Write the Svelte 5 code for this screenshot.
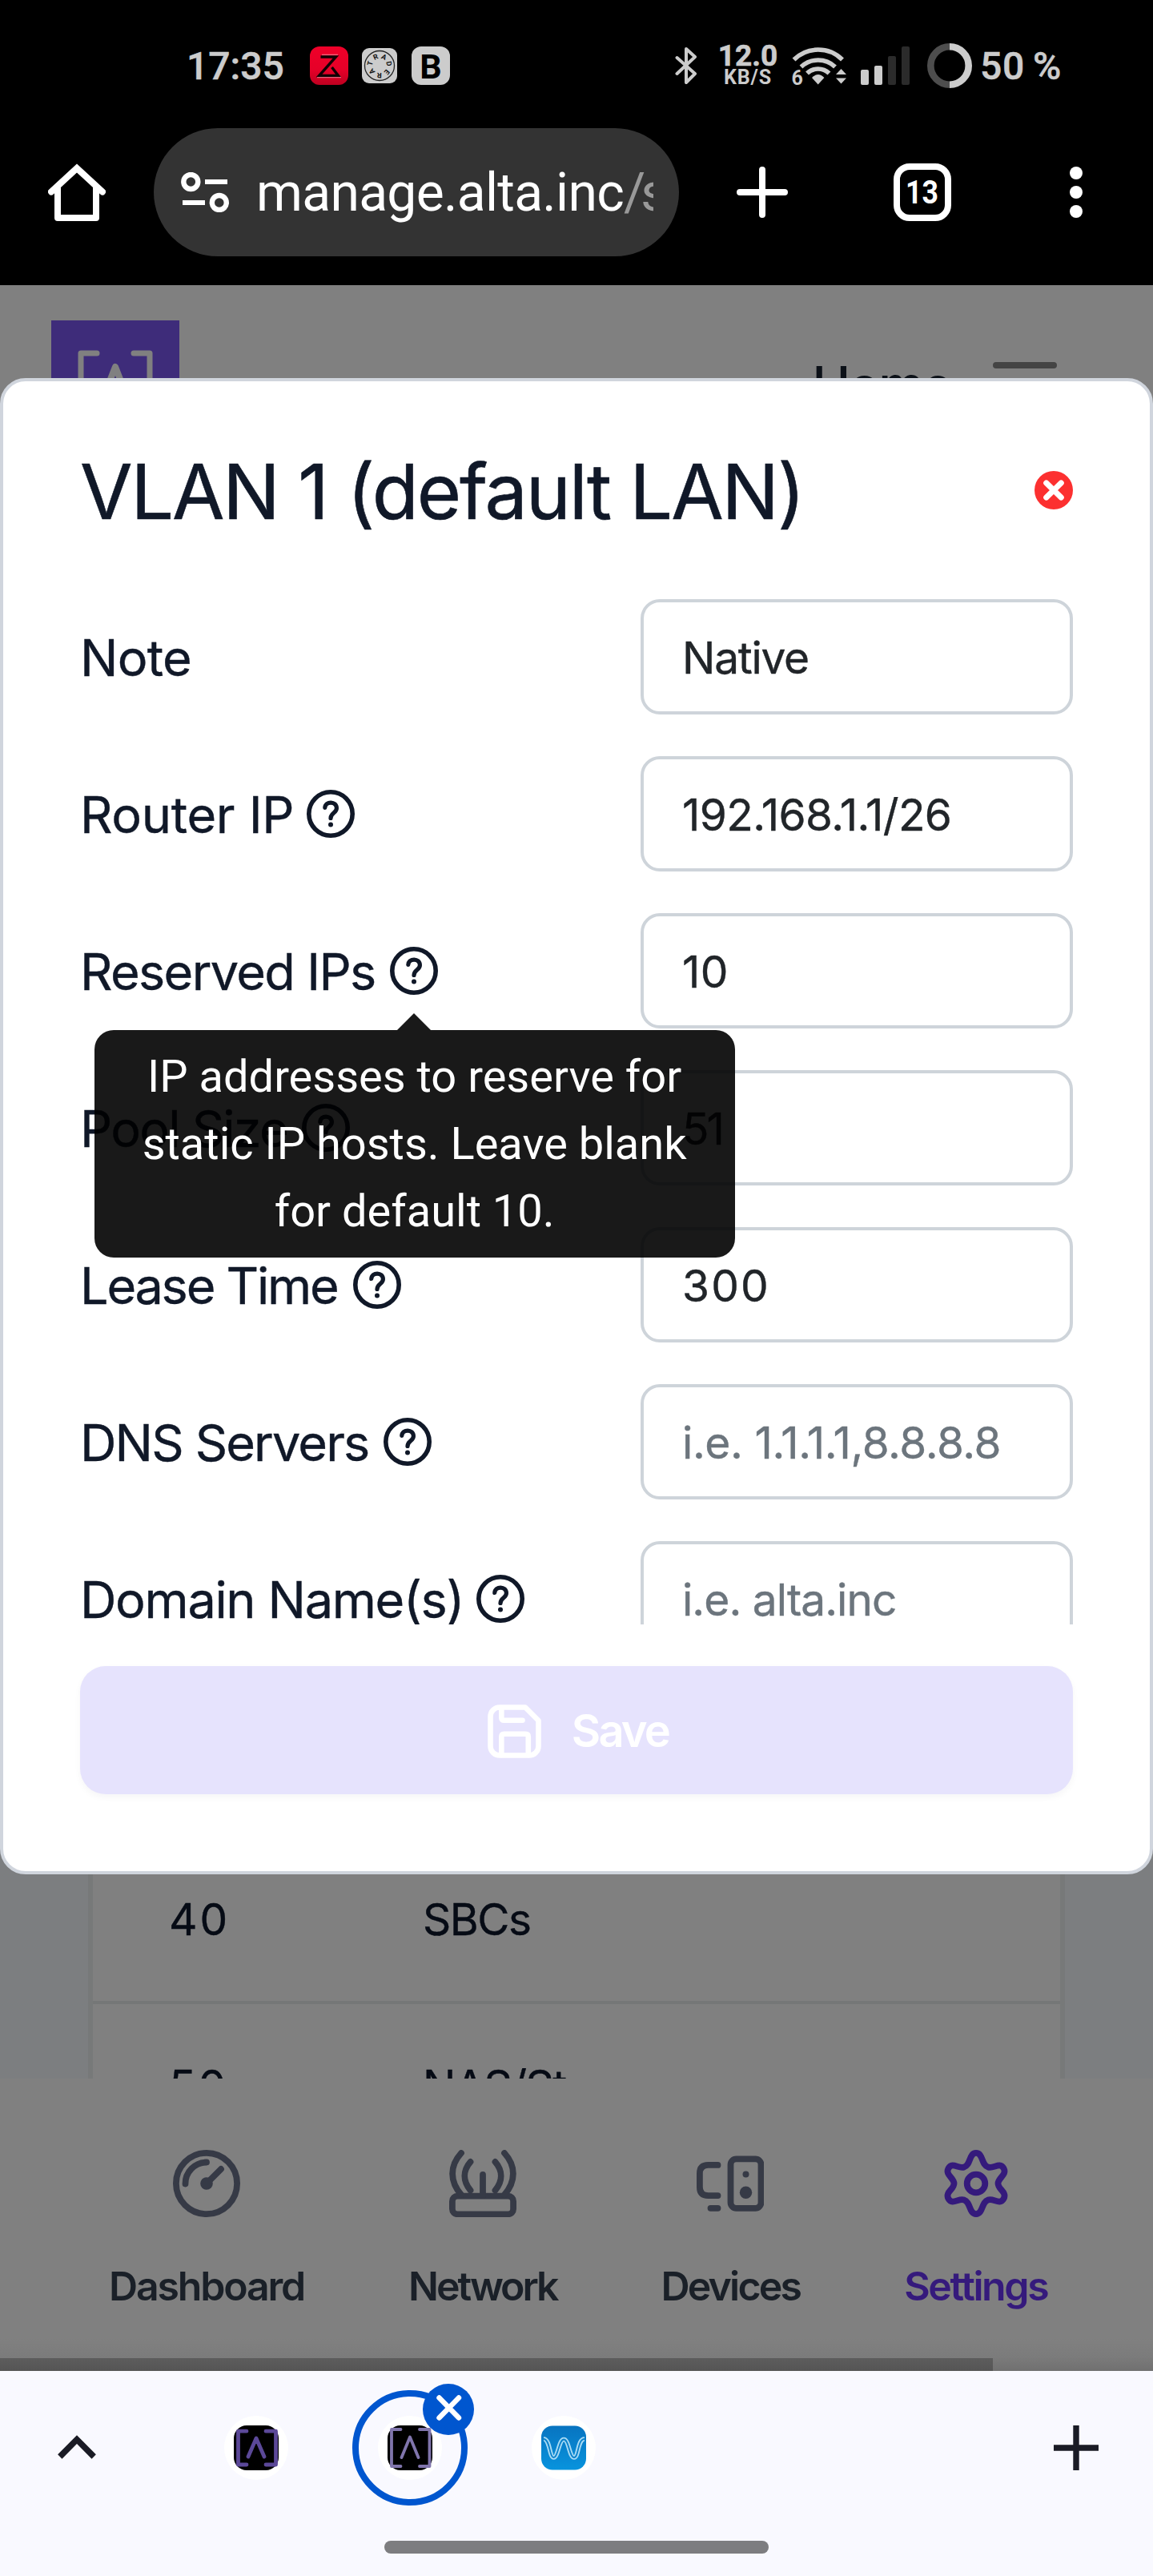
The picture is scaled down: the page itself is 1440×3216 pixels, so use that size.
<script>
  const fields = [
    { label: 'Note', value: 'Native', track: -0.75, inputTrack: -1.29 },
    { label: 'Router IP', value: '192.168.1.1/26', track: -0.3, inputTrack: -0.6, help: true, gap: 16 },
    { label: 'Reserved IPs', value: '10', track: -1.67, inputTrack: 0.5, help: true, gap: 18 },
    { label: 'Pool Size', value: '51', track: -1.75, inputTrack: -3, help: true, gap: 18 },
    { label: 'Lease Time', value: '300', track: -2.24, inputTrack: 2.2, help: true, gap: 19 },
    { label: 'DNS Servers', placeholder: 'i.e. 1.1.1.1,8.8.8.8', track: -1.85, inputTrack: -0.4, help: true, gap: 19 },
    { label: 'Domain Name(s)', placeholder: 'i.e. alta.inc', track: -1.35, inputTrack: -0.95, help: true, gap: 16 }
  ];
  fields[2].tip = 'IP addresses to reserve for static IP hosts. Leave blank for default 10.';

  const vlans = [
    { id: '40', name: 'SBCs' },
    { id: '50', name: 'NAS/St' }
  ];

  const dial = 'RADERAT'.split('').map((letter, i) => ({ letter, angle: -24 + i * 51.4 }));
</script>

<div class="screen">
  <div class="status">
    <span class="clock">17:35</span>
    <svg class="app-z" width="48" height="48" viewBox="0 0 48 48">
      <defs>
        <linearGradient id="red" x1="0" y1="0" x2="0" y2="1">
          <stop offset="0" stop-color="#ef0029" /><stop offset=".6" stop-color="#e60028" /><stop offset="1" stop-color="#be0020" />
        </linearGradient>
      </defs>
      <rect width="48" height="48" rx="12" fill="url(#red)" />
      <path d="M13.500 13H32.500L11.500 36.500H35.500L27.500 26" fill="none" stroke="#120004" stroke-width="3.4" />
      <path d="M15 10.300H35M9 38.700H39" stroke="#f6a3b0" stroke-width=".8" />
    </svg>
    <svg class="app-dial" width="44" height="44" viewBox="0 0 44 44">
      <rect width="44" height="44" rx="9" fill="#ccc" />
      <circle cx="22" cy="22" r="18.5" fill="none" stroke="#222" stroke-width="1.3" />
      {#each dial as d}
        <text x="22" y="13" text-anchor="middle" transform="rotate({d.angle} 22 22)">{d.letter}</text>
      {/each}
    </svg>
    <span class="app-b">B</span>

    <svg class="bt" width="28" height="48" viewBox="0 0 28 48" fill="none" stroke="#ccc" stroke-width="4" stroke-linejoin="round" stroke-linecap="round">
      <path d="M2.5 14 L25 34 L14 45 V3 L25 13 L2.5 34" />
    </svg>
    <div class="speed"><span class="rate">12.0</span><span class="unit">KB/S</span></div>
    <svg class="wifi" width="68" height="50" viewBox="0 0 68 50" fill="none" stroke="#ccc" stroke-width="5.6">
      <path d="M2.5 17.5A43 43 0 0 1 63 17.5" />
      <path d="M11.5 26.5A31 31 0 0 1 54 26.5" />
      <path d="M19 34.5A20 20 0 0 1 46.5 34.5" />
      <path d="M32.7 48.5L25 40Q32.7 32 40.4 40Z" fill="#ccc" stroke="none" />
      <path d="M55 36L61.5 29L68 36ZM55 40.5H68L61.5 47.5Z" fill="#ccc" stroke="none" />
      <text x="-.5" y="49">6</text>
    </svg>
    <svg class="signal" width="61" height="48" viewBox="0 0 61 48">
      <rect y="29" width="10" height="19" rx="2" fill="#ccc" />
      <rect x="17" y="24" width="10" height="24" rx="2" fill="#ccc" />
      <rect x="34" y="12" width="10" height="36" rx="2" fill="#2b2b2b" />
      <rect x="51" width="10" height="48" rx="2" fill="#2b2b2b" />
    </svg>
    <svg class="battery" width="56" height="56" viewBox="0 0 56 56" fill="none" stroke-width="8.6">
      <path d="M28 4.3A23.7 23.7 0 0 0 28 51.7" stroke="#4d4d4d" />
      <path d="M28 4.3A23.7 23.7 0 0 1 28 51.7" stroke="#ccc" />
    </svg>
    <span class="charge">50</span><span class="percent">%</span>
  </div>

  <div class="toolbar">
    <svg class="home" width="72" height="72" viewBox="0 0 72 72" fill="none" stroke="#fff" stroke-width="8" stroke-linecap="round" stroke-linejoin="round">
      <path d="M12 31V68H60V31" />
      <path d="M4 35.5L36 6L68 35.5" stroke-linejoin="miter" />
    </svg>
    <div class="address">
      <svg width="60" height="50" viewBox="0 0 60 50" fill="none" stroke="#fff" stroke-width="6.4">
        <circle cx="12.3" cy="12" r="9" /><circle cx="47.8" cy="38" r="9" />
        <path d="M30 12H58M2 38H30" stroke-width="6" />
      </svg>
      <span class="url">manage.alta.inc<span class="path">/s</span></span>
    </div>
    <svg class="plus" width="64" height="64" viewBox="0 0 64 64" stroke="#fff" stroke-width="8" stroke-linecap="round"><path d="M32 4V60M4 32H60" /></svg>
    <div class="tabs"><span>13</span></div>
    <svg class="dots" width="16" height="64" viewBox="0 0 16 64" fill="#fff"><circle cx="8" cy="8" r="8" /><circle cx="8" cy="32" r="8" /><circle cx="8" cy="56" r="8" /></svg>
  </div>

  <main class="page">
    <header>
      <svg width="160" height="160" viewBox="0 0 160 160">
        <rect width="160" height="160" fill="#3e2c7a" />
        <g fill="none" stroke="#808080" stroke-width="7" stroke-linecap="round" stroke-linejoin="round">
          <path d="M57 41H37V119H57M103 41H123V119H103" />
          <path d="M62 104L80 58L98 104" stroke-width="8" />
        </g>
      </svg>
      <span class="site">Home</span>
      <div class="menu"><i></i><i></i><i></i></div>
    </header>

    <section class="content">
      <div class="table">
        {#each vlans as v}
          <div class="vlan"><span>{v.id}</span><span>{v.name}</span></div>
        {/each}
      </div>
    </section>

    <nav>
      <div class="item">
        <svg width="84" height="84" viewBox="0 0 84 84" fill="none" stroke="currentColor" stroke-width="7.8" stroke-linecap="round">
          <circle cx="42" cy="42" r="38.1" />
          <path d="M15.5 42.5A26.7 26.7 0 0 1 42 15.5" />
          <path d="M42 42L60 24" />
          <circle cx="42" cy="42" r="7.8" fill="currentColor" stroke="none" />
        </svg>
        <span class="dash">Dashboard</span>
      </div>
      <div class="item">
        <svg width="84" height="84" viewBox="0 0 84 84" fill="none" stroke="currentColor" stroke-width="7.8" stroke-linecap="round" stroke-linejoin="round">
          <rect x="3.9" y="57.7" width="76.2" height="22.6" rx="6.5" />
          <path d="M42 31V57M15 56C.5 39 .5 20 15 4M69 56C83.5 39 83.5 20 69 4M26.5 50.5C17 39 17 26 26.5 15M57.5 50.5C67 39 67 26 57.5 15" />
        </svg>
        <span class="net">Network</span>
      </div>
      <div class="item">
        <svg width="84" height="84" viewBox="0 0 84 84" fill="none" stroke="currentColor" stroke-width="7.8" stroke-linecap="round" stroke-linejoin="round">
          <path d="M26.5 18.900H14.500Q3.900 18.900 3.900 29.500V46.500Q3.900 57.100 14.500 57.100H26.500M17.500 72.800H26.500" />
          <rect x="42.5" y="11.4" width="38" height="61.4" rx="7" />
          <circle cx="61.5" cy="30.5" r="4" fill="currentColor" stroke="none" />
          <circle cx="61.5" cy="53.3" r="7.7" fill="currentColor" stroke="none" />
        </svg>
        <span class="dev">Devices</span>
      </div>
      <div class="item active">
        <svg width="84" height="84" viewBox="0 0 84 84" fill="none" stroke="currentColor" stroke-width="7.8" stroke-linejoin="round">
          <path d="M42 3.900C51 3.900 48.500 19 57 21.500C64 24 71.500 14.500 76.500 23C81 31.500 69.500 34.500 69.500 42C69.500 49.500 81 52.500 76.500 61C71.500 69.500 64 60 57 62.500C48.500 65 51 80.100 42 80.100C33 80.100 35.500 65 27 62.500C20 60 12.500 69.500 7.500 61C3 52.500 14.500 49.500 14.500 42C14.500 34.500 3 31.500 7.500 23C12.500 14.500 20 24 27 21.500C35.500 19 33 3.900 42 3.900Z" />
          <circle cx="42" cy="42" r="11.3" />
        </svg>
        <span class="set">Settings</span>
      </div>
    </nav>
    <div class="track"><div class="thumb"></div></div>

    <div class="modal">
      <div class="head">
        <h1>VLAN 1 (default LAN)</h1>
        <svg width="48" height="48" viewBox="0 0 48 48">
          <circle cx="24" cy="24" r="24" fill="#fc3030" />
          <path d="M14.800 15L33.200 33M33.200 15L14.800 33" stroke="#fff" stroke-width="7.2" stroke-linecap="round" />
        </svg>
      </div>
      <div class="fields">
        {#each fields as f}
          <div class="field">
            <div class="label" style:gap="{f.gap ?? 0}px">
              <span style:letter-spacing="{f.track}px">{f.label}</span>
              {#if f.help}
                <div class="help">
                  <svg width="60" height="60" viewBox="0 0 60 60" fill="none" stroke="#101828" stroke-linecap="round">
                    <circle cx="30" cy="30" r="27.2" stroke-width="5.6" />
                    <path d="M22.800 22.500C23.200 13.800 37.400 13.800 37.400 23C37.400 29 30 28.500 30 35.500" stroke-width="5.2" />
                    <circle cx="30" cy="43.5" r="3" fill="#101828" stroke="none" />
                  </svg>
                  {#if f.tip}<div class="tip">{f.tip}</div>{/if}
                </div>
              {/if}
            </div>
            <input type="text" value={f.value ?? ''} placeholder={f.placeholder} style:letter-spacing="{f.inputTrack}px" />
          </div>
        {/each}
      </div>
      <button class="save" disabled>
        <svg width="67" height="67" viewBox="0 0 67 67" fill="none" stroke="#fff" stroke-width="6.6" stroke-linecap="round" stroke-linejoin="round">
          <path d="M15 3.500H47L63.500 20V52A11.500 11.500 0 0 1 52 63.500H15A11.500 11.500 0 0 1 3.500 52V15A11.500 11.500 0 0 1 15 3.500Z" />
          <path d="M17.300 4V16.500Q17.300 19.800 20.600 19.800H43.500M17.300 63V40Q17.300 36.700 20.600 36.700H47.500Q50.800 36.700 50.800 40V63" />
        </svg>
        <span>Save</span>
      </button>
    </div>
  </main>

  <footer>
    <div class="strip">
      <svg width="48" height="48" viewBox="0 0 48 48" fill="none" stroke="#1a1b25" stroke-width="7.5"><path d="M2.800 35L24 13.500L45.200 35" /></svg>
      <svg class="fav first" width="80" height="80" viewBox="0 0 80 80">
        <circle cx="40" cy="40" r="40" fill="#fff" />
        <rect x="12" y="12" width="56" height="56" rx="16" fill="#000" />
        <path d="M28 19.200H17.500V61H28M52 19.200H64.500V61H52M30 51L40 28L50 51" fill="none" stroke="#5b4898" stroke-width="4.8" stroke-linecap="round" stroke-linejoin="round" />
      </svg>
      <div class="current">
        <svg width="80" height="80" viewBox="0 0 80 80">
          <circle cx="40" cy="40" r="40" fill="#fff" />
          <rect x="12" y="12" width="56" height="56" rx="16" fill="#000" />
          <path d="M28.500 17H17V63H28.500M52 17H64.500V63H52M29.500 52L40 26.500L50.500 52" fill="none" stroke="#8075ac" stroke-width="3.8" stroke-linecap="round" stroke-linejoin="round" />
        </svg>
        <svg class="badge" width="64" height="64" viewBox="0 0 64 64">
          <circle cx="32" cy="32" r="32" fill="#0056cf" />
          <path d="M20.500 17.500L45 42.500M45 17.500L20.500 42.500" stroke="#fff" stroke-width="6.4" stroke-linecap="round" />
        </svg>
      </div>
      <svg class="fav" width="80" height="80" viewBox="0 0 80 80">
        <defs>
          <linearGradient id="sky" x1="0" y1="0" x2="0" y2="1"><stop offset="0" stop-color="#0874c0" /><stop offset="1" stop-color="#0893dd" /></linearGradient>
        </defs>
        <circle cx="40" cy="40" r="40" fill="#fff" />
        <rect x="12" y="12.5" width="56" height="55" rx="14" fill="url(#sky)" />
        <g fill="none">
          <path d="M15 29C23 29 22 52 27.500 52C33 52 34 29.500 40.200 29.500C46.500 29.500 47 52 53 52C59 52 57 29 66 29" stroke="#a9dbf5" stroke-width="5.6" />
          <path d="M15 29C23 29 22 52 27.500 52C33 52 34 29.500 40.200 29.500C46.500 29.500 47 52 53 52C59 52 57 29 66 29" stroke="#0a82cc" stroke-width="1.8" />
        </g>
      </svg>
      <svg class="add" width="56" height="56" viewBox="0 0 56 56" stroke="#1a1b25" stroke-width="7.4"><path d="M28 0V56M0 28H56" /></svg>
    </div>
    <div class="handle"></div>
  </footer>
</div>

<style>
  :global(body) { margin: 0; background: #000; }
  * { box-sizing: border-box; }
  svg { display: block; flex: none; }

  .screen { width: 1440px; height: 3216px; overflow: hidden; background: #000; font-family: Inter, "Liberation Sans", sans-serif; }

  .status { height: 160px; padding: 4px 0 0 233px; display: flex; align-items: center; color: #ccc; font-family: Roboto, sans-serif; font-weight: 500; font-size: 48px; white-space: nowrap; }
  .clock { width: 121px; -webkit-text-stroke: .5px; }
  .app-z { margin-left: 33px; }
  .app-dial { margin-left: 17px; }
  .app-dial text { font: 700 9px Roboto, sans-serif; fill: #111; }
  .app-b { margin-left: 18px; width: 48px; height: 48px; border-radius: 12px; background: #ccc; color: #000; font-size: 43px; line-height: 50px; font-weight: 700; text-align: center; }
  .bt { margin-left: 281px; }
  .speed { margin-left: 26px; width: 74px; display: flex; flex-direction: column; align-items: center; font-weight: 700; }
  .rate { font-size: 37px; line-height: 28px; letter-spacing: 0; -webkit-text-stroke: .6px; }
  .unit { font-size: 25px; line-height: 25px; letter-spacing: .9px; }
  .wifi { margin-left: 18px; }
  .wifi text { font: 700 25px Roboto, sans-serif; fill: #ccc; stroke: #000; stroke-width: 3px; paint-order: stroke; }
  .signal { margin-left: 18px; }
  .battery { margin-left: 22px; }
  .charge { margin-left: 10px; letter-spacing: .7px; -webkit-text-stroke: .5px; }
  .percent { margin-left: 10px; -webkit-text-stroke: .5px; }

  .toolbar { height: 196px; padding: 0 0 36px 60px; display: flex; align-items: center; }
  .address { margin-left: 60px; width: 656px; height: 160px; border-radius: 80px; background: #333; padding-left: 34px; display: flex; align-items: center; }
  .url { margin-left: 34px; width: 496px; padding-top: 2px; overflow: hidden; white-space: nowrap; font: 66px/100px Roboto, sans-serif; letter-spacing: -.7px; color: #fff; }
  .path { color: #999; letter-spacing: -6px; }
  .plus { margin-left: 72px; }
  .tabs { margin-left: 132px; width: 72px; height: 72px; border: 8px solid #fff; border-radius: 20px; color: #fff; display: flex; align-items: center; justify-content: center; font: 700 41px/56px Roboto, sans-serif; }
  .tabs span { transform: scaleX(.87); }
  .dots { margin-left: 148px; }

  .page { position: relative; height: 2604px; background: #808080; overflow: hidden; }
  header { height: 248px; padding: 0 120px 0 64px; display: flex; align-items: center; }
  .site { margin-left: auto; color: #0c1118; font-size: 64px; font-weight: 500; letter-spacing: -1.8px; }
  .menu { margin-left: 52px; width: 80px; display: flex; flex-direction: column; gap: 16px; }
  .menu i { height: 8px; border-radius: 4px; background: #444; }

  .content { height: 1991px; padding: 0 110px; background: #7c7e80; overflow: hidden; }
  .table { height: 100%; padding-top: 1690px; background: #808080; border: solid #777979; border-width: 0 6px; overflow: hidden; }
  .vlan { height: 208px; padding-left: 95px; display: grid; grid-template-columns: 317px 1fr; align-items: center; border-bottom: 4px solid #757777; font-size: 55px; letter-spacing: -1.5px; color: #060b15; -webkit-text-stroke: .4px; }
  .vlan span:first-child { letter-spacing: 3px; }

  nav { height: 349px; padding: 89px 0 0 136px; display: flex; gap: 130px; background: linear-gradient(#808080 93%, #7b7b7b); color: #363a46; }
  .item { display: flex; flex-direction: column; align-items: center; gap: 56px; }
  .item span { font-size: 50px; line-height: 60px; font-weight: 600; color: #1a2028; }
  .item .dash { letter-spacing: -2.19px; }
  .item .net { letter-spacing: -3.06px; }
  .item .dev { letter-spacing: -2.8px; }
  .item .set { letter-spacing: -2.4px; }
  .active, .item.active span { color: #351a7c; }
  .track { height: 16px; background: linear-gradient(#7a7a7a, #707070); }
  .thumb { width: 1240px; height: 16px; background: linear-gradient(#5d5d5d, #555); }

  .modal { position: absolute; left: 0; top: 116px; width: 1440px; height: 1868px; padding: 0 96px; border: 4px solid #d0d5dd; border-radius: 32px; background: #fff; }
  .head { height: 272px; display: flex; align-items: center; justify-content: space-between; }
  h1 { margin: 2px 0 0; font-size: 95px; font-weight: 400; letter-spacing: -2.15px; color: #101828; white-space: nowrap; -webkit-text-stroke: .6px; }
  .fields { height: 1280px; overflow: hidden; display: flex; flex-direction: column; gap: 52px; }
  .field { height: 144px; flex: none; display: flex; align-items: center; justify-content: space-between; }
  .label { display: flex; align-items: center; font-size: 63px; color: #101828; white-space: nowrap; }
  .label > span { padding-top: 2px; -webkit-text-stroke: .4px; }
  .help { position: relative; }
  .help:has(.tip) { z-index: 2; }
  .tip { position: absolute; top: 104px; left: 31px; width: 800px; transform: translateX(-50%); padding: 16px 48px; border-radius: 24px; background: rgba(0, 0, 0, .9); color: #fff; font: 56px/84px Roboto, sans-serif; text-align: center; white-space: normal; }
  .tip::before { content: ""; position: absolute; left: 378px; bottom: 100%; border: 21px solid transparent; border-top: 0; border-bottom-color: rgba(0, 0, 0, .9); }
  input { width: 540px; height: 144px; padding: 2px 44px 0 48px; border: 4px solid #ced4da; border-radius: 24px; background: #fff; color: #212529; font: 55px Inter, sans-serif; outline: 0; -webkit-text-stroke: .4px; }
  input::placeholder { color: #6c757d; opacity: 1; }
  .save { margin-top: 52px; width: 1240px; height: 160px; padding: 2px 0 0 4px; border: 0; border-radius: 32px; background: #e6e3fd; box-shadow: 0 4px 8px rgba(16, 24, 40, .04); display: flex; align-items: center; justify-content: center; gap: 38px; color: #fff; font: 600 56px Inter, sans-serif; letter-spacing: -2.83px; }

  footer { height: 256px; background: #f9f9ff; }
  .strip { height: 192px; padding-left: 72px; display: flex; align-items: center; }
  .fav { margin-left: 80px; }
  .fav.first { margin-left: 160px; }
  .current { position: relative; margin-left: 80px; width: 144px; height: 144px; border: 8px solid #0056cf; border-radius: 50%; display: flex; align-items: center; justify-content: center; }
  .badge { position: absolute; left: 80px; top: -16px; }
  .add { margin-left: 572px; }
  .handle { margin: 20px auto 0; width: 480px; height: 16px; border-radius: 8px; background: #7d7d80; }
</style>
